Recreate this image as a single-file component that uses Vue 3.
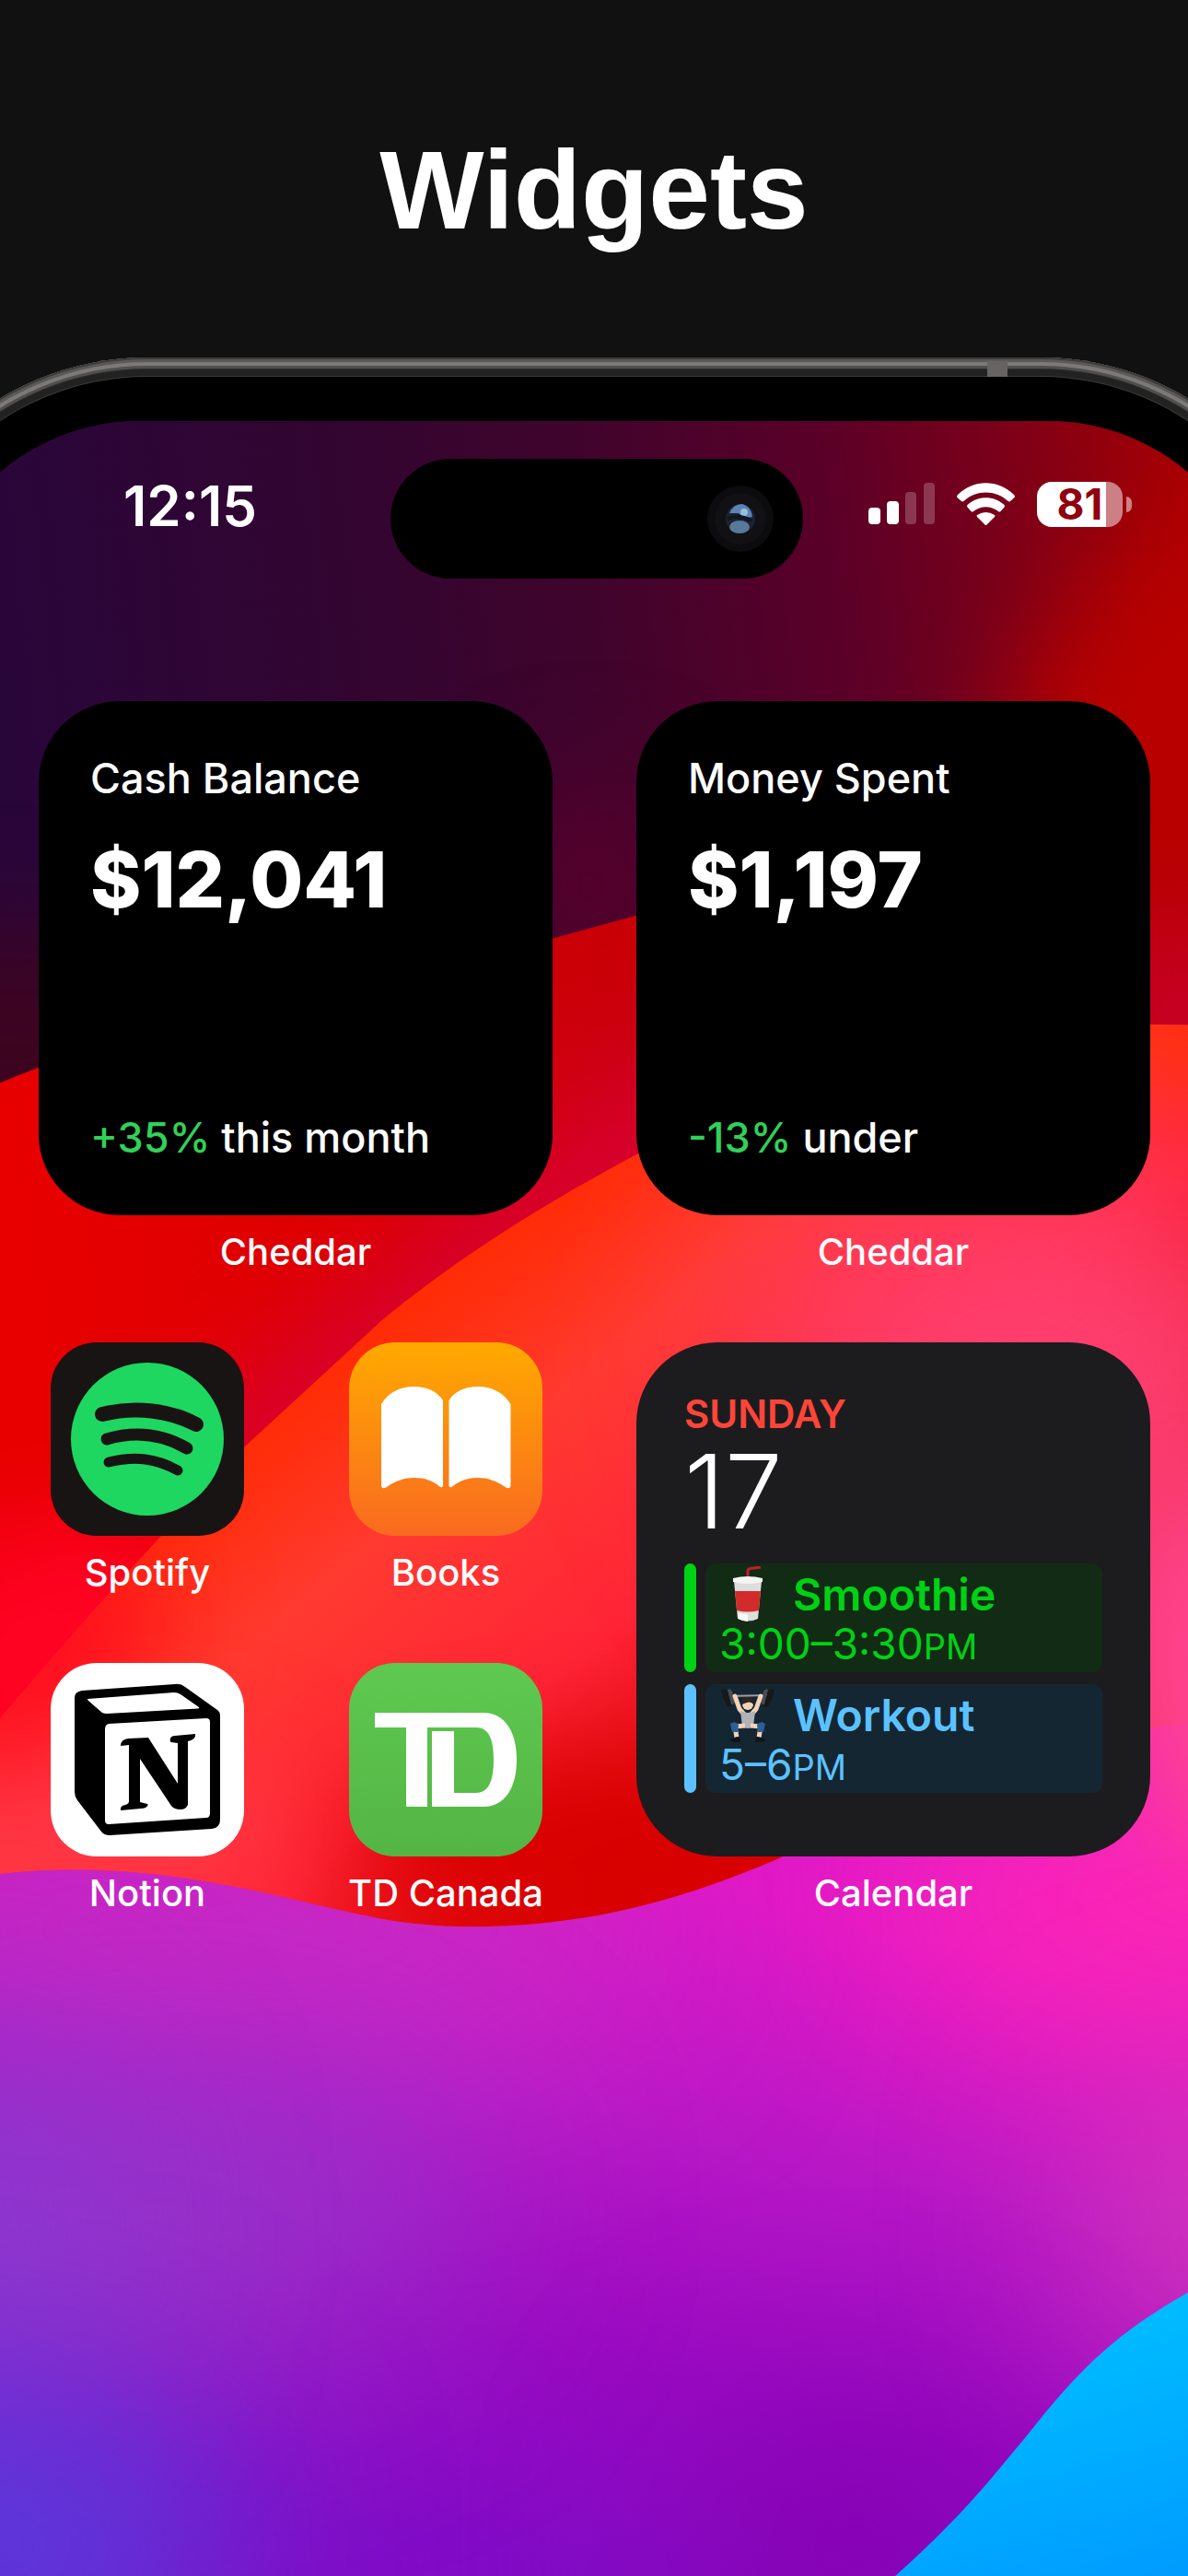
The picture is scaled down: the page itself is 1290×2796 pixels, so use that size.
<template>
  <main class="page">
    <h1 class="headline">Widgets</h1>

    <section class="phone">
      <span class="antenna"></span>
      <div class="screen">
        <svg class="wallpaper" viewBox="0 0 1450 2339" preserveAspectRatio="xMidYMin slice" aria-hidden="true">
          <defs>
            <linearGradient id="night" gradientUnits="userSpaceOnUse" x1="0" y1="700" x2="1290" y2="560">
              <stop offset="0" stop-color="#29063a" />
              <stop offset="0.32" stop-color="#330530" />
              <stop offset="0.5" stop-color="#40042c" />
              <stop offset="0.7" stop-color="#5a0028" />
              <stop offset="0.84" stop-color="#78001a" />
              <stop offset="1" stop-color="#a40004" />
            </linearGradient>
            <linearGradient id="crimson" gradientUnits="userSpaceOnUse" x1="0" y1="1300" x2="700" y2="1180">
              <stop offset="0" stop-color="#e80000" />
              <stop offset="0.55" stop-color="#dc0000" />
              <stop offset="1" stop-color="#cc0012" />
            </linearGradient>
            <linearGradient id="coral" gradientUnits="userSpaceOnUse" x1="380" y1="1440" x2="800" y2="1960">
              <stop offset="0" stop-color="#ff2a00" />
              <stop offset="0.3" stop-color="#ff3a30" />
              <stop offset="0.65" stop-color="#ff2436" />
              <stop offset="1" stop-color="#d80000" />
            </linearGradient>
            <linearGradient id="violet" gradientUnits="userSpaceOnUse" x1="820" y1="2060" x2="660" y2="2796">
              <stop offset="0" stop-color="#e018c8" />
              <stop offset="0.35" stop-color="#b818c6" />
              <stop offset="0.7" stop-color="#980ac2" />
              <stop offset="1" stop-color="#820cc6" />
            </linearGradient>
            <linearGradient id="sky" gradientUnits="userSpaceOnUse" x1="1180" y1="2520" x2="1260" y2="2796">
              <stop offset="0" stop-color="#00bcff" />
              <stop offset="1" stop-color="#009cff" />
            </linearGradient>
            <clipPath id="clip-night"><path d="M-80 457H1370V1300H-80Z" /></clipPath>
            <clipPath id="clip-crimson"><path :d="crimsonWave" /></clipPath>
            <clipPath id="clip-coral"><path :d="coralWave" /></clipPath>
            <clipPath id="clip-violet"><path :d="violetWave" /></clipPath>
            <filter id="soft" x="-100%" y="-100%" width="300%" height="300%" color-interpolation-filters="sRGB">
              <feGaussianBlur stdDeviation="60" />
            </filter>
            <filter id="softer" x="-100%" y="-100%" width="300%" height="300%" color-interpolation-filters="sRGB">
              <feGaussianBlur stdDeviation="110" />
            </filter>
          </defs>

          <g transform="translate(80 -457)">
            <g clip-path="url(#clip-night)">
              <rect x="-80" y="457" width="1450" height="900" fill="url(#night)" />
              <ellipse cx="0" cy="1140" rx="260" ry="130" fill="#3e0420" filter="url(#soft)" />
              <path d="M1400 480L1180 640L1100 760L1140 1300H1400Z" fill="#b80000" filter="url(#soft)" />
              <ellipse cx="1290" cy="1110" rx="120" ry="110" fill="#c80026" filter="url(#soft)" />
              <ellipse cx="640" cy="960" rx="90" ry="110" fill="#58002c" filter="url(#soft)" />
            </g>
            <g clip-path="url(#clip-crimson)">
              <rect x="-80" y="900" width="1450" height="1200" fill="url(#crimson)" />
              <path d="M780 1120L560 1270L180 1570L260 1680L800 1300Z" fill="#d80032" filter="url(#soft)" />
              <ellipse cx="660" cy="1010" rx="110" ry="70" fill="#c60000" filter="url(#soft)" />
              <ellipse cx="60" cy="1800" rx="180" ry="140" fill="#ff0022" filter="url(#soft)" />
            </g>
            <g clip-path="url(#clip-coral)">
              <rect x="-80" y="1000" width="1450" height="1200" fill="url(#coral)" />
              <ellipse cx="1290" cy="1110" rx="100" ry="70" fill="#ff3000" filter="url(#soft)" />
              <ellipse cx="1110" cy="1480" rx="290" ry="210" fill="#ff4070" filter="url(#softer)" />
              <ellipse cx="1290" cy="1750" rx="130" ry="300" fill="#ff4884" filter="url(#softer)" />
              <ellipse cx="60" cy="1980" rx="250" ry="90" fill="#ff3848" filter="url(#soft)" />
              <ellipse cx="620" cy="2010" rx="240" ry="100" fill="#d80000" filter="url(#soft)" />
            </g>
            <!-- the coral edge melts into the red behind it here -->
            <path d="M140 1710L-40 1900" stroke="#ff0524" stroke-width="120" filter="url(#soft)" />
            <g clip-path="url(#clip-violet)">
              <rect x="-80" y="1700" width="1450" height="1100" fill="url(#violet)" />
              <ellipse cx="260" cy="2090" rx="460" ry="150" fill="#c82ac4" filter="url(#softer)" />
              <ellipse cx="180" cy="2400" rx="340" ry="170" fill="#9832ca" filter="url(#softer)" />
              <ellipse cx="-40" cy="2420" rx="160" ry="200" fill="#8c3ad0" filter="url(#softer)" />
              <ellipse cx="-20" cy="2760" rx="280" ry="170" fill="#583cdc" filter="url(#softer)" />
              <ellipse cx="1280" cy="2060" rx="320" ry="150" fill="#ff28b4" filter="url(#softer)" />
              <ellipse cx="1340" cy="2410" rx="150" ry="150" fill="#d83cb8" filter="url(#softer)" />
              <ellipse cx="930" cy="2760" rx="180" ry="140" fill="#8600b0" filter="url(#softer)" />
            </g>
            <ellipse cx="1340" cy="1820" rx="130" ry="190" fill="#ff4490" filter="url(#soft)" />
            <path d="M968 2796C1046 2727 1078 2684 1110 2646C1160 2584 1196 2538 1290 2485C1316 2470 1340 2460 1370 2450V2796Z" fill="url(#sky)" />
          </g>
        </svg>

        <header class="status">
          <time class="clock">12:15</time>
          <div class="island">
            <svg viewBox="0 0 72 72" aria-hidden="true">
              <circle cx="36" cy="36" r="36" fill="#0c0b0d" />
              <circle cx="36" cy="36" r="28" fill="#111012" />
              <circle cx="36" cy="36" r="16" fill="#1c232e" />
              <ellipse cx="35" cy="45" rx="11" ry="7" fill="#56799c" />
              <path d="M24 30Q28 20 38 20Q48 23 49 34Q40 36 34 30Z" fill="#5f80b8" />
              <circle cx="40" cy="29" r="4" fill="#8fc3d8" />
              <path d="M22 36Q34 31 48 38" stroke="#11151c" stroke-width="4" fill="none" />
            </svg>
          </div>
          <div class="indicators">
            <svg class="signal" viewBox="0 0 72 46" aria-label="Signal">
              <rect y="27" width="13" height="18" rx="4" fill="#fff" />
              <rect x="20" y="20" width="13" height="25" rx="4" fill="#fff" />
              <rect x="40" y="10" width="12" height="35" rx="4" fill="#fff" opacity="0.22" />
              <rect x="60" width="12" height="45" rx="4" fill="#fff" opacity="0.22" />
            </svg>
            <svg class="wifi" viewBox="0 0 63 47" fill="#fff" aria-label="Wi-Fi">
              <path d="M1 13C18-4 45-4 62 13Q64 15 62 16.500L58 20Q57 21 55 19.500C42 7.500 21 7.500 8 19.500Q6 21 5 20L1 16.500Q-1 15 1 13Z" />
              <path d="M11.500 24C22.500 13.500 40.500 13.500 51.500 24Q52.500 25.500 51.500 26.500L47.500 31Q46 32 45 31C37 24.500 26 24.500 18 31Q17 32 15.500 31L11.500 26.500Q10.500 25.500 11.500 24Z" />
              <path d="M22 35Q31.500 29 41 35Q42 36 41 37L32.500 45.500Q31.500 46.500 30.500 45.500L22 37Q21 36 22 35Z" />
            </svg>
            <div class="battery">
              <span class="battery-body">{{ battery }}</span>
              <span class="battery-tip"></span>
            </div>
          </div>
        </header>

        <div class="home">
          <figure v-for="widget in widgets" :key="widget.title" class="cell">
            <div class="card stat">
              <p class="stat-title">{{ widget.title }}</p>
              <p class="stat-amount">{{ widget.amount }}</p>
              <p class="stat-note">
                <span class="change">{{ widget.change }}</span> {{ widget.note }}
              </p>
            </div>
            <figcaption class="label">Cheddar</figcaption>
          </figure>

          <nav class="apps">
            <a class="app" href="#spotify">
              <svg class="icon spotify" viewBox="0 0 210 210" aria-hidden="true">
                <circle cx="105" cy="105" r="83" fill="#1ed760" />
                <g fill="none" stroke="#191414" stroke-linecap="round">
                  <path d="M56 78C92 69 130 74 158 89" stroke-width="16" />
                  <path d="M61 105C92 96 122 100 148 115" stroke-width="13" />
                  <path d="M63 130C92 123 115 126 138 139" stroke-width="11" />
                </g>
              </svg>
              <span class="label">Spotify</span>
            </a>
            <a class="app" href="#books">
              <svg class="icon books" viewBox="0 0 210 210" fill="#fff" aria-hidden="true">
                <path :d="bookPage" />
                <path :d="bookPage" transform="translate(210.500 0) scale(-1 1)" />
              </svg>
              <span class="label">Books</span>
            </a>
            <a class="app" href="#notion">
              <svg class="icon notion" viewBox="0 0 210 210" aria-hidden="true">
                <path d="M26 38Q26 31 34 30L135 23Q141 22 146 26L181 51Q184 53 184 57V170Q184 179 175 180L64 187Q58 187 55 183L29 149Q26 145 26 140Z" />
                <path fill="#fff" d="M40 39L134 32Q138 32 141 34L161 48Q162 49 160 49.500L61 55Q58 55 56 54L41 41Q40 40 40 39ZM59 72Q59 67 63 66L169 60Q173 60 173 64V163Q173 168 169 168L63 175Q59 175 59 171Z" />
                <path d="M76 90Q76 83 84 82L106 81L138 131V87L131 86Q129 85 130 82Q131 79 135 79L157 77Q158 83 149 85V154Q147 159 141 159Q134 159 131 155L97 104V151L105 153Q107 154 103 157Q101 158 98 158L76 160Q75 155 81 154Q85 153 85 150V89Z" />
              </svg>
              <span class="label">Notion</span>
            </a>
            <a class="app" href="#td">
              <svg class="icon td" viewBox="0 0 210 210" fill="#fff" aria-hidden="true">
                <path d="M28 54H146C170 54 182 76 182 105S170 156 146 156H90V74H114V141H138C152 141 157 127 157 105S152 70 138 70H85V156H62V70H28Z" />
              </svg>
              <span class="label">TD Canada</span>
            </a>
          </nav>

          <figure class="cell">
            <div class="card calendar">
              <p class="weekday">SUNDAY</p>
              <p class="day">17</p>
              <ul class="events">
                <li class="event smoothie">
                  <div class="event-body">
                    <p class="event-title">
                      <svg viewBox="0 0 62 62" aria-hidden="true">
                        <path d="M31 14V5Q31 3 34 2.500L45 1" fill="none" stroke="#c0202a" stroke-width="3" />
                        <path d="M16 16H46L42 57Q31 62 20 57Z" fill="#dedede" />
                        <path d="M17 27H45L43 48Q31 51 19 48Z" fill="#d22b2b" />
                        <path d="M15 13Q31 9 47 13V17Q31 21 15 17Z" fill="#f4f4f4" />
                        <path d="M20 51L21 57Q26 60 31 60V52Z" fill="#f8f8f8" />
                      </svg>
                      Smoothie
                    </p>
                    <p class="event-time">3:00–3:30<span class="meridiem">PM</span></p>
                  </div>
                </li>
                <li class="event workout">
                  <div class="event-body">
                    <p class="event-title">
                      <svg viewBox="0 0 62 62" aria-hidden="true">
                        <path d="M9 10L54 9" stroke="#9aa0a6" stroke-width="2" />
                        <path d="M2 4Q4 1 8 3L15 19Q14 22 10 22Q5 16 2 4Z" fill="#17181a" />
                        <path d="M9 3Q12 1 14 5L17 15Q16 20 13 19Z" fill="#484b50" />
                        <path d="M60 4Q58 1 54 3L47 19Q48 22 52 22Q57 16 60 4Z" fill="#17181a" />
                        <path d="M53 3Q50 1 48 5L45 15Q46 20 49 19Z" fill="#484b50" />
                        <path d="M17 10L22 24L28 31M45 10L40 24L34 31" fill="none" stroke="#f3d3b8" stroke-width="5" stroke-linecap="round" />
                        <path d="M23 26Q31 30 39 26L37 43Q31 47 25 43Z" fill="#b0b2b5" />
                        <circle cx="31" cy="19" r="6" fill="#f3d3b8" />
                        <path d="M25 19Q24 11 31 11Q38 11 37 19Q34 14 25 19Z" fill="#33241f" />
                        <path d="M28 42L17 43L19 55M34 42L45 43L43 55" fill="none" stroke="#f3d3b8" stroke-width="5" stroke-linejoin="round" />
                        <path d="M12 40Q17 36 21 41L20 49H14ZM50 40Q45 36 41 41L42 49H48Z" fill="#2c5f94" />
                        <path d="M11 59Q15 54 22 54L23 60ZM51 59Q47 54 40 54L39 60Z" fill="#101418" />
                      </svg>
                      Workout
                    </p>
                    <p class="event-time">5–6<span class="meridiem">PM</span></p>
                  </div>
                </li>
              </ul>
            </div>
            <figcaption class="label">Calendar</figcaption>
          </figure>
        </div>
      </div>
    </section>
  </main>
</template>

<script setup>
import { ref } from "vue";

const battery = ref(81);

const widgets = ref([
  { title: "Cash Balance", amount: "$12,041", change: "+35%", note: "this month" },
  { title: "Money Spent", amount: "$1,197", change: "-13%", note: "under" },
]);

// wallpaper waves, back to front
const crimsonWave =
  "M-80 1206L0 1175Q20 1166 42 1158C220 1090 420 1072 600 1018L691 993C760 975 860 930 960 900L1100 1300L900 2100H-80Z";
const coralWave =
  "M-80 1960C60 1790 160 1680 267 1568L417 1430C500 1362 590 1306 691 1252C900 1150 1100 1111 1249 1111L1370 1113V2200H-80Z";
const violetWave =
  "M-80 2046Q-40 2036 0 2032C120 2018 230 2038 330 2062C400 2078 440 2089 514 2089C640 2089 745 2058 843 2016C960 1960 1090 1880 1370 1860V2800H-80Z";

const bookPage =
  "M35 67C43 54 56 48 70 48C84 48 96 53 102 63V156Q101 158 99 157C91 150 82 147 71 147C60 147 51 150 41 157Q36 160 35 156Z";
</script>

<style>
body {
  margin: 0;
  background: #111111;
}
</style>

<style scoped>
.page {
  display: flex;
  flex-direction: column;
  min-height: 100vh;
  overflow: hidden;
  background: #111111;
  color: #fff;
  font-family: Inter, "Liberation Sans", sans-serif;
}

p,
h1,
ul,
figure {
  margin: 0;
  padding: 0;
}

.headline {
  padding: 134px 0 110px;
  font-family: "Liberation Sans", Arial, sans-serif;
  font-size: 120px;
  font-weight: 700;
  line-height: 144px;
  text-align: center;
}

/* the handset is wider than the page, both sides run off the edge */
.phone {
  position: relative;
  display: flex;
  flex: 1;
  margin: 0 -150px;
  padding: 69px 69px 0;
  border-radius: 310px 310px 0 0;
  background: #000;
  box-shadow:
    inset 0 0 0 2px #3c3b3a,
    inset 0 0 0 5px #5a5958,
    inset 0 0 0 9px #7b7a78,
    inset 0 0 0 12px #504f4e,
    inset 0 0 0 13px #2e2d2c,
    inset 0 0 0 20px #232222,
    inset 0 0 0 21px #3a3a39;
}

.antenna {
  position: absolute;
  top: 4px;
  right: 346px;
  width: 22px;
  height: 17px;
  background: #656462;
}

.screen {
  position: relative;
  flex: 1;
  padding: 0 81px;
  border-radius: 232px 232px 0 0;
  overflow: hidden;
  background: #2a0638;
}

.wallpaper {
  position: absolute;
  inset: 0;
  width: 100%;
  height: 100%;
}

.status {
  position: relative;
  display: grid;
  grid-template-columns: 424px 448px 1fr;
  align-items: center;
  padding-top: 41px;
}

.clock {
  padding-left: 134px;
  margin-top: -28px;
  font-size: 60px;
  font-weight: 600;
  line-height: 64px;
}

.island {
  display: flex;
  align-items: center;
  justify-content: flex-end;
  height: 130px;
  padding-right: 32px;
  box-sizing: border-box;
  border-radius: 65px;
  background: #000;
}

.island svg {
  width: 72px;
  height: 72px;
}

.indicators {
  display: flex;
  align-items: center;
  justify-content: flex-end;
  gap: 24px;
  margin-top: -32px;
  padding-right: 61px;
}

.signal {
  width: 72px;
  height: 46px;
}

.wifi {
  width: 63px;
  height: 47px;
}

.battery {
  display: flex;
  align-items: center;
  gap: 4px;
}

.battery-body {
  width: 93px;
  border-radius: 16px;
  background: linear-gradient(90deg, #fff 81%, rgba(255, 255, 255, 0.5) 81%);
  color: #90000e;
  font-size: 46px;
  font-weight: 700;
  line-height: 49px;
  text-align: center;
}

.battery-tip {
  width: 6px;
  height: 17px;
  border-radius: 0 8px 8px 0;
  background: rgba(255, 255, 255, 0.5);
}

.home {
  position: relative;
  display: grid;
  grid-template-columns: 1fr 1fr;
  gap: 74px 91px;
  padding: 133px 41px 80px 42px;
}

.cell {
  display: flex;
  flex-direction: column;
  gap: 16px;
}

.card {
  display: flex;
  flex-direction: column;
  height: 558px;
  box-sizing: border-box;
  border-radius: 88px;
}

.label {
  font-size: 40px;
  font-weight: 500;
  line-height: 48px;
  text-align: center;
  white-space: nowrap;
}

.stat {
  padding: 56px;
  background: #000;
}

.stat-title,
.stat-note {
  font-size: 45px;
  font-weight: 500;
  line-height: 56px;
}

.stat-amount {
  margin-top: 34px;
  font-size: 84px;
  font-weight: 800;
  line-height: 96px;
}

.stat-note {
  margin-top: auto;
}

.change {
  color: #30d158;
}

.apps {
  display: grid;
  grid-template-columns: 210px 210px;
  align-content: start;
  justify-content: space-between;
  row-gap: 74px;
  padding: 0 11px 0 13px;
}

.app {
  display: flex;
  flex-direction: column;
  align-items: center;
  gap: 16px;
  width: 210px;
  color: #fff;
  text-decoration: none;
}

.icon {
  width: 210px;
  height: 210px;
  border-radius: 50px;
}

.spotify {
  background: #191414;
}

.books {
  background: linear-gradient(#ffaa00, #f96a20);
}

.notion {
  background: #fff;
}

.td {
  background: linear-gradient(#5ec950, #54b545);
}

.calendar {
  padding: 53px 52px;
  background: #1c1c1e;
}

.weekday {
  color: #ff453a;
  font-size: 42px;
  font-weight: 600;
  line-height: 50px;
}

.day {
  margin-top: 4px;
  font-size: 112px;
  font-weight: 300;
  line-height: 108px;
}

.events {
  display: flex;
  flex-direction: column;
  gap: 13px;
  margin-top: 25px;
  list-style: none;
}

.event {
  display: flex;
  gap: 10px;
}

.event::before {
  content: "";
  width: 13px;
  border-radius: 7px;
  background: currentColor;
}

.event-body {
  flex: 1;
  padding: 6px 15px;
  border-radius: 10px;
}

.smoothie {
  color: #00d115;
}

.smoothie .event-body {
  background: #112b14;
}

.workout {
  color: #5bc2ff;
}

.workout .event-body {
  background: #152633;
}

.event-title {
  display: flex;
  align-items: center;
  gap: 18px;
  font-size: 48px;
  font-weight: 600;
  line-height: 56px;
}

.event-title svg {
  width: 62px;
  height: 62px;
  margin: -3px 0;
}

.event-time {
  font-size: 46px;
  line-height: 50px;
}

.meridiem {
  font-size: 38px;
  line-height: 1;
}
</style>
